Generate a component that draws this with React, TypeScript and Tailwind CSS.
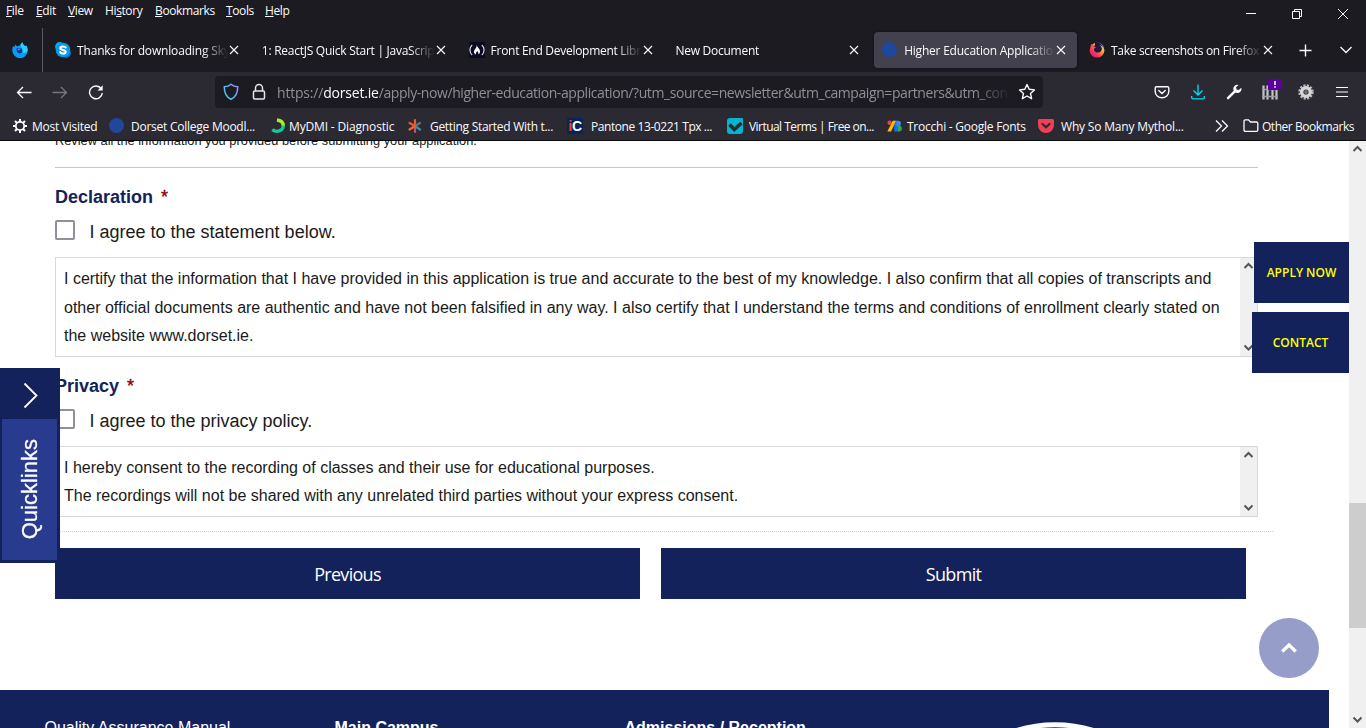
import type { ReactNode } from "react";

const UI = "font-['Open_Sans','Noto_Sans',sans-serif]";

function Close() {
  return (
    <svg className="w-3 h-3 shrink-0" viewBox="0 0 12 12" fill="none" stroke="#fbfbfe" strokeWidth="1.1">
      <path d="M2 2l8 8M10 2l-8 8" />
    </svg>
  );
}

function Tab({ icon, title, active, tracking }: { icon?: ReactNode; title: string; active?: boolean; tracking: string }) {
  return (
    <div className={`flex items-center w-[203px] h-9 shrink-0 rounded pl-2 pr-[10px] ${active ? "bg-[#42414d] shadow-[0_0_3px_rgba(0,0,0,0.5)]" : ""}`}>
      {icon && <span className="w-4 h-4 mr-[6px] shrink-0">{icon}</span>}
      <span
        className={`flex-1 min-w-0 overflow-hidden whitespace-nowrap text-[12px] leading-4 pt-[2px] ${tracking} [mask-image:linear-gradient(to_right,black_calc(100%-26px),transparent)]`}
      >
        {title}
      </span>
      <Close />
    </div>
  );
}

function FirefoxBlue() {
  return (
    <svg viewBox="0 0 16 16" className="w-4 h-4">
      <path d="M1 4.2L2.6 5 3 2.6 5.2 4.4C6.4 3.6 7.4 3.8 8.2 3.9 8.6 2.4 9.4 1 10.4.2c.2 2 1.6 2.8 2.7 4.1L14 3.6c1.2 1.6 1.8 3.2 1.7 5A7.7 7.7 0 0 1 .3 8.4C.2 6.9.4 5.5 1 4.2z" fill="#0a9cf5" />
      <path d="M10.4.2c.2 2 1.6 2.8 2.7 4.1L14 3.6c1.2 1.6 1.8 3.2 1.7 5-1.3 2.6-4 3-5.5 1.5C11.700 8 10 5.500 8.200 3.900 8.600 2.400 9.400 1 10.400.2z" fill="#29d0fb" />
      <path d="M4.500 6.500c1.200-.8 2.500-.6 3.500.2l1.500-.3c1.200 1.400 1.200 3.600-.3 4.600-2 1.200-5-.2-4.700-4.500z" fill="#1b2f9a" />
      <path d="M5.500 6.800l2.800.1-1.800 1.600z" fill="#35c8f5" />
    </svg>
  );
}

function Skype() {
  return (
    <svg viewBox="0 0 16 16" className="w-4 h-4">
      <circle cx="4.700" cy="4.700" r="4.600" fill="#0aaef0" />
      <circle cx="11.300" cy="11.300" r="4.600" fill="#0673c9" />
      <circle cx="8" cy="8" r="7.300" fill="#0b9ae6" />
      <path d="M10.800 5.500C10 4.300 5.400 3.700 5.300 6.200c0 2.300 5.500 1.300 5.400 3.700-.2 2.400-4.900 2-5.600.3" fill="none" stroke="#fff" strokeWidth="2.100" strokeLinecap="round" />
    </svg>
  );
}

function FreeCodeCamp() {
  return (
    <svg viewBox="0 0 16 16" className="w-4 h-4">
      <rect width="16" height="16" fill="#0a0a23" />
      <path d="M3.200 3C.2 5.500.2 10.500 3.200 13M12.800 3c3 2.500 3 7.500 0 10" fill="none" stroke="#d8d8e0" strokeWidth="1.200" />
      <path d="M7.700 3c.6 2.500 3.500 3.800 3.300 6.700-.1 1.400-.8 2.200-1.700 2.800.6-1.700-.2-2.600-1.300-3.500-.2 1-1.500 1.800-1 3.500C4.300 11.300 4.700 9 6 7.300 7 6 7.700 5 7.700 3z" fill="#fff" />
    </svg>
  );
}

function FirefoxLogo() {
  return (
    <svg viewBox="0 0 16 16" className="w-4 h-4">
      <defs>
        <linearGradient id="fx" x1="0.900" y1="0.100" x2="0.200" y2="0.900">
          <stop offset="0" stopColor="#ffe04a" />
          <stop offset="0.400" stopColor="#ff9a3c" />
          <stop offset="0.700" stopColor="#ff3c50" />
          <stop offset="1" stopColor="#e31587" />
        </linearGradient>
      </defs>
      <circle cx="8" cy="8.200" r="7.400" fill="url(#fx)" />
      <path d="M6 .3h6L14.500 5c-1-1-2-1.500-3.500-1.500L6 3z" fill="#1c1b22" />
      <path d="M8.500.8c3.500-.4 6.300 2.200 6.700 5.200-.8-1-1.700-1.300-1.700-1.300-.8-2.200-2.500-3.300-5-3.900z" fill="#6a3fe0" />
      <path d="M5.500 3.500c2.500-2 6.800-.8 7.300 2.800.3 2.800-2 4.500-4.300 4.300-2.300-.1-4-2-3.500-4.100l2.500-.7-2.300-.5z" fill="#1e1740" />
      <path d="M1.500 4l1.200-2.200L5 3.800 4.600 6z" fill="#ff4a45" />
    </svg>
  );
}

function Dot() {
  return <span className="block w-[15px] h-[15px] rounded-full bg-[#1f479c]" />;
}

function TabStrip() {
  return (
    <div className="flex items-center h-[50px]">
      <div className="w-[42px] h-full flex items-center pl-3 pt-[6px] shrink-0">
        <FirefoxBlue />
      </div>
      <div className="w-px h-[44px] bg-[#5b5a63] self-end mr-1 shrink-0" />
      <div className="flex gap-[3.800px] items-center w-[1238px] mt-[6px] self-start pt-1">
        <Tab icon={<Skype />} title="Thanks for downloading Skype" tracking="tracking-[-0.16px]" />
        <Tab title="1: ReactJS Quick Start | JavaScript" tracking="tracking-[-0.26px]" />
        <Tab icon={<FreeCodeCamp />} title="Front End Development Libraries" tracking="tracking-[-0.28px]" />
        <Tab title="New Document" tracking="tracking-[-0.25px]" />
        <Tab icon={<Dot />} title="Higher Education Application" active tracking="tracking-[-0.22px]" />
        <Tab icon={<FirefoxLogo />} title="Take screenshots on Firefox | Fir" tracking="tracking-[-0.3px]" />
      </div>
      <div className="flex items-center w-[81px] shrink-0 pt-[6px]">
        <svg className="w-[14px] h-[14px] ml-[13px]" viewBox="0 0 14 14" fill="none" stroke="#fbfbfe" strokeWidth="1.400">
          <path d="M7.500 1.500v12M1.500 7.500h12" />
        </svg>
        <svg className="w-[14px] h-[14px] ml-[27px]" viewBox="0 0 14 14" fill="none" stroke="#fbfbfe" strokeWidth="1.300">
          <path d="M1.500 4L7 9.500 12.500 4" />
        </svg>
      </div>
    </div>
  );
}

const menus: [string, string, string, string][] = [
  ["", "F", "ile", "w-[30px]"],
  ["", "E", "dit", "w-[32px]"],
  ["", "V", "iew", "w-[37px]"],
  ["Hi", "s", "tory", "w-[50px]"],
  ["", "B", "ookmarks", "w-[71px]"],
  ["", "T", "ools", "w-[39px]"],
  ["", "H", "elp", "w-[40px]"],
];

function MenuBar() {
  return (
    <div className="flex h-[22px] justify-between">
      <div className="flex pl-[6px] pt-[3px] text-[12px] leading-4 tracking-[-0.38px]">
        {menus.map(([a, u, b, w]) => (
          <span key={u + b} className={`${w} whitespace-nowrap`}>
            {a}
            <span className="underline underline-offset-1">{u}</span>
            {b}
          </span>
        ))}
      </div>
      <svg className="w-[120px] h-[22px]" viewBox="0 0 120 22" fill="none" stroke="#fbfbfe">
        <path d="M0 13.500h10M46.500 11.500h7v7h-7zM48.500 11.500v-2h7v7h-2" />
        <path d="M92 9l10 10M102 9l-10 10" />
      </svg>
    </div>
  );
}

function NavIcon({ children }: { children: ReactNode }) {
  return <div className="w-9 h-8 flex items-center justify-center">{children}</div>;
}

function NavBar() {
  return (
    <div className="flex items-center h-10 bg-[#2b2a33] pl-[6px]">
      <NavIcon>
        <svg className="w-4 h-4" viewBox="0 0 16 16" fill="none" stroke="#fbfbfe" strokeWidth="1.300"><path d="M15.500 8.500H1.500M7 3L1.500 8.500 7 14" /></svg>
      </NavIcon>
      <NavIcon>
        <svg className="w-4 h-4" viewBox="0 0 16 16" fill="none" stroke="#77767e" strokeWidth="1.300"><path d="M.5 8.500h14M9 3l5.500 5.500L9 14" /></svg>
      </NavIcon>
      <NavIcon>
        <svg className="w-4 h-4" viewBox="0 0 16 16" fill="none" stroke="#fbfbfe" strokeWidth="1.400"><path d="M13.200 4.700A6.400 6.400 0 1 0 14.300 9" /><path d="M14.700 1.300v5.200H9.500z" fill="#fbfbfe" stroke="none" /></svg>
      </NavIcon>
      <div className="ml-[101px] w-[828px] h-8 rounded bg-[#1c1b22] flex items-center pl-2">
        <svg className="w-4 h-[18px]" viewBox="0 0 16 18" fill="none" strokeWidth="1.500">
          <defs>
            <linearGradient id="sh" x1="0" y1="1" x2="1" y2="0"><stop offset="0" stopColor="#2fd0fa" /><stop offset="1" stopColor="#9a92fa" /></linearGradient>
          </defs>
          <path stroke="url(#sh)" d="M8 1.200C6.300 2.700 4 3.600 1.300 3.800 1.200 9.200 3 14 8 16.300c5-2.300 6.800-7.100 6.700-12.500C12 3.600 9.700 2.700 8 1.200z" />
        </svg>
        <svg className="w-4 h-[18px] ml-3" viewBox="0 0 16 18" fill="none" stroke="#e6e6ea" strokeWidth="1.500">
          <rect x="2.500" y="8" width="11" height="8" rx="1.200" /><path d="M4.500 8V5a3.500 3.500 0 0 1 7 0v3" />
        </svg>
        <span className="ml-[10px] pt-[2px] w-[733px] overflow-hidden whitespace-nowrap text-[14px] leading-5 text-[#8f8f96] tracking-[-0.42px] [mask-image:linear-gradient(to_right,black_calc(100%-36px),transparent)]">
          <span className="tracking-[-0.2px]">https://<span className="text-[#fbfbfe]">dorset.ie</span></span>/apply-now/higher-education-application/?utm_source=newsletter&amp;utm_campaign=partners&amp;utm_content
        </span>
        <svg className="w-[18px] h-[18px] ml-2" viewBox="0 0 18 18" fill="none" stroke="#fbfbfe" strokeWidth="1.400" strokeLinejoin="round"><path d="M9 1.500l2.200 4.800 5.200.6-3.900 3.500 1.100 5.300L9 13l-4.600 2.700 1.100-5.300L1.600 6.900l5.200-.6z" /></svg>
      </div>
      <div className="flex ml-[101px]">
        <NavIcon>
          <svg className="w-4 h-4" viewBox="0 0 16 16" fill="none" stroke="#fbfbfe" strokeWidth="1.400" strokeLinecap="round"><path d="M2.500 2.700h11c.8 0 1.300.5 1.300 1.300v3.500a6.800 6.300 0 0 1-13.600 0V4c0-.8.500-1.300 1.300-1.300z" /><path d="M4.800 6.500L8 9.500l3.200-3" /></svg>
        </NavIcon>
        <NavIcon>
          <svg className="w-4 h-4" viewBox="0 0 16 16" fill="none" stroke="#00ddff" strokeWidth="1.300"><path d="M8 .5v10M3.500 6.500L8 11l4.500-4.500M1.700 12v1.500c0 .8.500 1.300 1.300 1.300h10c.8 0 1.300-.5 1.300-1.300V12" /></svg>
        </NavIcon>
        <NavIcon>
          <svg className="w-4 h-4" viewBox="0 0 16 16"><path d="M2 14.200L8.500 7.700" stroke="#fbfbfe" strokeWidth="2.400" strokeLinecap="round" /><path d="M12.500.9a4 4 0 0 0-5 5c.3 1.500 1.300 2.500 2.800 2.800a4 4 0 0 0 5-5L12.800 6l-2.200-.5L10 3.300z" fill="#fbfbfe" /></svg>
        </NavIcon>
        <NavIcon>
          <svg className="w-5 h-8 overflow-visible" viewBox="0 0 20 32">
            <path d="M3.500 9.500V23.500M7.500 9.500V23.500M12.500 9.500V23.500M16.500 9.500V23.500" stroke="#c4c4c9" strokeWidth="2.200" />
            <path d="M2 13.500h16M2 20.500h16" stroke="#9d9da4" strokeWidth="1.500" />
            <rect x="8" y="3" width="14" height="11" rx="1" fill="#5d00a0" />
            <path d="M15 5v4M15 10.200v1.600" stroke="#fff" strokeWidth="1.500" />
          </svg>
        </NavIcon>
        <NavIcon>
          <svg className="w-4 h-4" viewBox="0 0 16 16"><circle cx="8" cy="8" r="6.300" fill="none" stroke="#bbb" strokeWidth="2.800" strokeDasharray="2 1.300" /><circle cx="8" cy="8" r="4.300" fill="none" stroke="#d5d5d5" strokeWidth="3.400" /><circle cx="8" cy="8" r="1.900" fill="#6d6d72" /></svg>
        </NavIcon>
        <NavIcon>
          <svg className="w-4 h-4" viewBox="0 0 16 16" stroke="#fbfbfe" strokeWidth="1.200"><path d="M2 3.500h12M2 8h12M2 12.500h12" /></svg>
        </NavIcon>
      </div>
    </div>
  );
}

function Gear() {
  return (
    <svg className="w-4 h-4" viewBox="0 0 16 16" fill="none" stroke="#fbfbfe">
      <circle cx="8" cy="8" r="4.200" strokeWidth="1.800" />
      <path strokeWidth="2" d="M8 1v3M8 12v3M1 8h3M12 8h3M3 3l2 2M11 11l2 2M3 13l2-2M11 5l2-2" />
    </svg>
  );
}
function Swirl() {
  return (
    <svg className="w-4 h-4" viewBox="0 0 16 16" fill="none" strokeWidth="3.400">
      <path d="M7 2c4 .3 6.300 2.700 6.300 6" stroke="#a6ee1c" />
      <path d="M13.300 7.500c0 4.500-6 8-11 4.200" stroke="#16c79a" />
    </svg>
  );
}
function Asterisk() {
  return (
    <svg className="w-4 h-4" viewBox="0 0 16 16" strokeWidth="2.200" strokeLinecap="round">
      <path d="M8 8V2" stroke="#f0592b" /><path d="M8 8l5-3" stroke="#58777f" /><path d="M8 8l5 3.500" stroke="#3c8fa0" /><path d="M8 8v6" stroke="#b7566d" /><path d="M8 8l-5.500 3.500" stroke="#f4643c" /><path d="M8 8L2.500 5" stroke="#f0592b" />
    </svg>
  );
}
function IC() {
  return (
    <span className="flex w-4 h-4 bg-[#05255b] items-center justify-center font-['Liberation_Sans',sans-serif] font-bold text-[14px] leading-4 tracking-[-0.3px]">
      <span className="text-[#ff3b14]">i</span><span className="text-white">C</span>
    </span>
  );
}
function Check() {
  return (
    <svg className="w-4 h-4" viewBox="0 0 16 16"><path d="M0 3a3 3 0 0 1 3-3h12a1 1 0 0 1 1 1v12a3 3 0 0 1-3 3H3a3 3 0 0 1-3-3z" fill="#06b4cf" /><path d="M2.500 6.500L7.300 11.500 14.500 5" fill="none" stroke="#2b2a33" strokeWidth="3.600" /></svg>
  );
}
function GFonts() {
  return (
    <svg className="w-4 h-4" viewBox="0 0 16 16">
      <circle cx="2.600" cy="4.800" r="2.200" fill="#ea4335" />
      <path d="M5.800 2.800h3.400L4 13.500H.3z" fill="#fbbc04" />
      <path d="M7.300 6.500L9.200 2.800h1.300v10.700H7.300z" fill="#1a73e8" />
      <path d="M9.500 2.800h1.700a2.700 2.700 0 0 1 0 5.400H9.500z" fill="#4285f4" />
      <path d="M10.500 7.500h1.300a3 3 0 0 1 0 6h-1.300z" fill="#34a853" />
    </svg>
  );
}
function PocketRed() {
  return (
    <svg className="w-4 h-4" viewBox="0 0 16 16"><path d="M1.500 1h13A1.500 1.500 0 0 1 16 2.500V7A8 8 0 0 1 0 7V2.500A1.500 1.500 0 0 1 1.500 1z" fill="#ef4056" /><path d="M4.500 6L8 9.300 11.500 6" fill="none" stroke="#2b2a33" strokeWidth="2.200" strokeLinecap="round" /></svg>
  );
}

const bookmarks: { icon: ReactNode; label: string; box: string; gap: string; tracking: string }[] = [
  { icon: <Gear />, label: "Most Visited", box: "w-[97px]", gap: "ml-1", tracking: "tracking-[-0.26px]" },
  { icon: <Dot />, label: "Dorset College Moodl...", box: "w-[161px]", gap: "ml-[6px]", tracking: "tracking-[-0.25px]" },
  { icon: <Swirl />, label: "MyDMI - Diagnostic", box: "w-[137px]", gap: "ml-[3px]", tracking: "tracking-[-0.15px]" },
  { icon: <Asterisk />, label: "Getting Started With t...", box: "w-[160px]", gap: "ml-[7px]", tracking: "tracking-[-0.3px]" },
  { icon: <IC />, label: "Pantone 13-0221 Tpx ...", box: "w-[160px]", gap: "ml-2", tracking: "tracking-[-0.43px]" },
  { icon: <Check />, label: "Virtual Terms | Free on...", box: "w-[160px]", gap: "ml-[6px]", tracking: "tracking-[-0.55px]" },
  { icon: <GFonts />, label: "Trocchi - Google Fonts", box: "w-[151px]", gap: "ml-1", tracking: "tracking-[-0.24px]" },
  { icon: <PocketRed />, label: "Why So Many Mythol...", box: "w-[176px]", gap: "ml-[7px]", tracking: "tracking-[-0.18px]" },
];

function BookmarksBar() {
  return (
    <div className="flex items-center h-[28px] bg-[#2b2a33] pl-3 text-[12px] leading-4">
      {bookmarks.map((b) => (
        <div key={b.label} className={`flex items-center shrink-0 whitespace-nowrap ${b.box}`}>
          <span className="w-4 h-4 shrink-0">{b.icon}</span>
          <span className={`pt-[2px] ${b.gap} ${b.tracking}`}>{b.label}</span>
        </div>
      ))}
      <svg className="w-[14px] h-[14px] shrink-0 ml-px" viewBox="0 0 14 14" fill="none" stroke="#fbfbfe" strokeWidth="1.300"><path d="M1 1.500L6.500 7 1 12.500M7 1.500L12.500 7 7 12.500" /></svg>
      <svg className="w-4 h-4 shrink-0 ml-[14px]" viewBox="0 0 16 16" fill="none" stroke="#fbfbfe" strokeWidth="1.300"><path d="M1 3.200C1 2.300 1.500 1.800 2.300 1.800h3.200L7.500 4h6c.8 0 1.300.5 1.300 1.300V12c0 .8-.5 1.300-1.300 1.300H2.300C1.500 13.300 1 12.800 1 12z" /></svg>
      <span className="ml-[3px] pt-[2px] whitespace-nowrap tracking-[-0.46px]">Other Bookmarks</span>
    </div>
  );
}

function Arrow({ down }: { down?: boolean }) {
  return (
    <svg className="w-[17px] h-[17px]" viewBox="0 0 17 17" fill="none" stroke="#555" strokeWidth="2">
      {down ? <path d="M4.500 6.500l4 4 4-4" /> : <path d="M4.500 10l4-4 4 4" />}
    </svg>
  );
}

function Consent({ title, label, lines, height, leading }: { title: string; label: string; lines: string[]; height: string; leading: string }) {
  return (
    <section>
      <h3 className="text-[18px] leading-6 font-bold text-[#14225c] h-6">
        {title}<span className="ml-2 font-normal text-[#8b0000] [-webkit-text-stroke:0.4px_#8b0000]">*</span>
      </h3>
      <div className="flex items-center mt-[11px] h-5">
        <span className="w-5 h-5 border-2 border-[#8f8f9d] rounded-xs bg-white" />
        <span className="ml-[14.500px] pt-[3px] text-[18px] leading-5">{label}</span>
      </div>
      <div className={`mt-[17px] ${height} w-[1203px] border border-[#d8d8d8] flex justify-between`}>
        <div className={`pl-2 pt-[7px] text-[16px] ${leading} whitespace-nowrap`}>
          {lines.map((l) => <p key={l}>{l}</p>)}
        </div>
        <div className="w-[17px] bg-[#f0f0f0] flex flex-col justify-between"><Arrow /><Arrow down /></div>
      </div>
    </section>
  );
}

function Page() {
  return (
    <div className="flex-1 h-full flex flex-col font-['Liberation_Sans',Arial,sans-serif] text-[#1a1a1a]">
      <div className="pl-[55px] w-full">
        <p className="text-[12.800px] leading-4 -mt-2 h-[34px]">Review all the information you provided before submitting your application.</p>
        <div className="w-[1203px] h-px bg-[#c8c8c8]" />
        <div className="pt-[17px]">
          <Consent
            title="Declaration"
            label="I agree to the statement below."
            height="h-[100px]"
            leading="leading-[28.500px]"
            lines={[
              "I certify that the information that I have provided in this application is true and accurate to the best of my knowledge. I also confirm that all copies of transcripts and",
              "other official documents are authentic and have not been falsified in any way. I also certify that I understand the terms and conditions of enrollment clearly stated on",
              "the website www.dorset.ie.",
            ]}
          />
        </div>
        <div className="pt-[17px]">
          <Consent
            title="Privacy"
            label="I agree to the privacy policy."
            height="h-[71px]"
            leading="leading-[28px]"
            lines={[
              "I hereby consent to the recording of classes and their use for educational purposes.",
              "The recordings will not be shared with any unrelated third parties without your express consent.",
            ]}
          />
        </div>
        <div className="mt-[14px] w-[1218px] border-t border-dotted border-[#d4d4d4]" />
        <div className="mt-4 flex gap-[21px] font-['Open_Sans','Noto_Sans',sans-serif] text-[18px] text-white">
          <button className="w-[585px] h-[51px] pt-[2px] bg-[#14225c] tracking-[-0.72px]">Previous</button>
          <button className="w-[585px] h-[51px] pt-[2px] bg-[#14225c] tracking-[-0.65px]">Submit</button>
        </div>
      </div>
      <footer className="mt-[91px] w-[1329px] h-[38px] shrink-0 bg-[#14225c] text-white flex overflow-hidden pl-[44.500px] text-[16px] leading-5">
        <span className="w-[290px] mt-[28px] shrink-0">Quality Assurance Manual</span>
        <span className="w-[290px] mt-[28px] shrink-0 font-bold">Main Campus</span>
        <span className="w-[330px] mt-[28px] shrink-0 font-bold">Admissions / Reception</span>
        <svg className="w-[200px] h-[38px] shrink-0" viewBox="0 0 200 38" fill="none"><circle cx="100" cy="164.500" r="129.800" stroke="#fff" strokeWidth="5" /></svg>
      </footer>
    </div>
  );
}

export default function App() {
  return (
    <div className={`w-[1366px] h-[728px] overflow-hidden flex flex-col bg-[#1c1b22] text-[#fbfbfe] ${UI}`}>
      <MenuBar />
      <TabStrip />
      <NavBar />
      <BookmarksBar />
      <div className="h-px bg-[#0c0c0d] shrink-0" />
      <main className="relative h-[587px] flex bg-white overflow-hidden">
        <Page />
        <div className="w-[17px] shrink-0 bg-[#f0f0f0] flex flex-col justify-between">
          <Arrow />
          <div className="h-[125px] bg-[#cdcdcd] mt-[345px] mb-auto" />
          <Arrow down />
        </div>
        <div className="absolute left-0 top-[227px] w-[60px] h-[195px] bg-[#14225c] flex flex-col">
          <svg className="w-[60px] h-[51px]" viewBox="0 0 60 51" fill="none" stroke="#fff" strokeWidth="1.800"><path d="M24.500 15.500L36.500 27.500 24.500 39.500" /></svg>
          <div className="ml-[2px] w-[55px] h-[141px] bg-[#283b8e] flex items-center justify-center font-['Liberation_Sans',Arial,sans-serif] text-[22px]">
            <span className="[writing-mode:vertical-rl] rotate-180 [-webkit-text-stroke:0.3px_#fff]">Quicklinks</span>
          </div>
        </div>
        <div className="absolute right-[17px] top-[101px] flex flex-col items-end gap-[9px] text-[12px] font-semibold text-[#ffff00] font-['Open_Sans','Noto_Sans',sans-serif]">
          <div className="w-[95px] h-[61px] bg-[#14225c] flex items-center justify-center">APPLY NOW</div>
          <div className="w-[97px] h-[61px] bg-[#14225c] flex items-center justify-center">CONTACT</div>
        </div>
        <div className="absolute left-[1259px] top-[477px] w-[60px] h-[60px] rounded-full bg-[#969dc8] flex items-center justify-center">
          <svg className="w-5 h-5" viewBox="0 0 20 20" fill="none" stroke="#fff" strokeWidth="3.200"><path d="M3.200 13.500L10 7l6.800 6.500" /></svg>
        </div>
      </main>
    </div>
  );
}
